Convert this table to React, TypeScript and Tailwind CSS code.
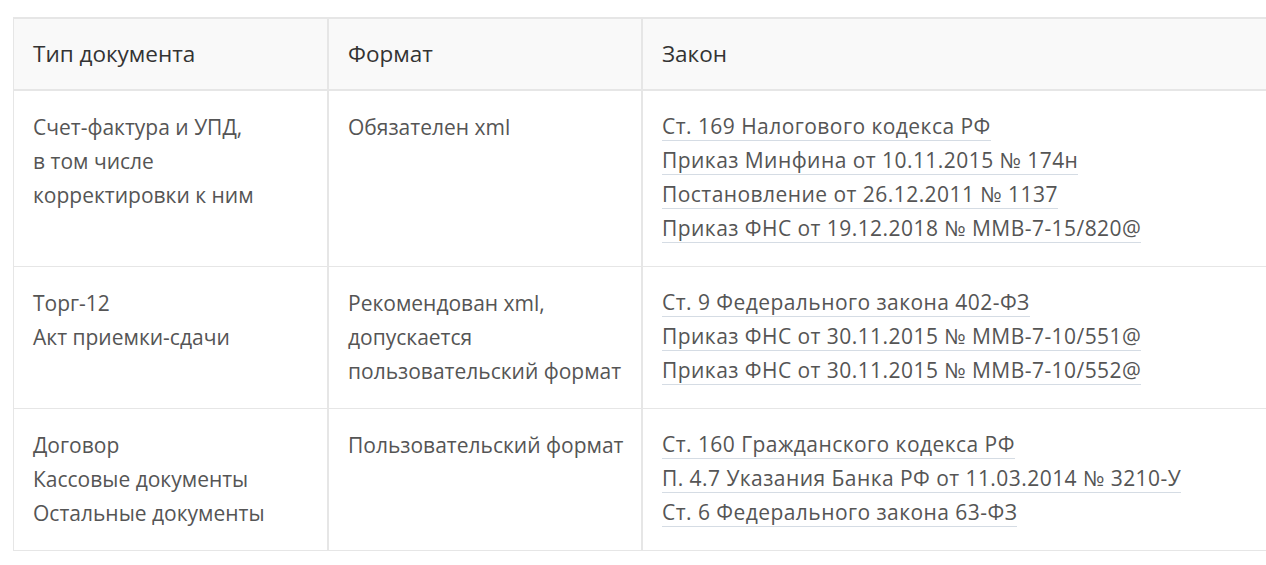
import React from "react";

const rows = [
  {
    type: ["Счет-фактура и УПД,", "в том числе", "корректировки к ним"],
    format: ["Обязателен xml"],
    laws: [
      "Ст. 169 Налогового кодекса РФ",
      "Приказ Минфина от 10.11.2015 № 174н",
      "Постановление от 26.12.2011 № 1137",
      "Приказ ФНС от 19.12.2018 № ММВ-7-15/820@",
    ],
  },
  {
    type: ["Торг-12", "Акт приемки-сдачи"],
    format: ["Рекомендован xml,", "допускается", "пользовательский формат"],
    laws: [
      "Ст. 9 Федерального закона 402-ФЗ",
      "Приказ ФНС от 30.11.2015 № ММВ-7-10/551@",
      "Приказ ФНС от 30.11.2015 № ММВ-7-10/552@",
    ],
  },
  {
    type: ["Договор", "Кассовые документы", "Остальные документы"],
    format: ["Пользовательский формат"],
    laws: [
      "Ст. 160 Гражданского кодекса РФ",
      "П. 4.7 Указания Банка РФ от 11.03.2014 № 3210-У",
      "Ст. 6 Федерального закона 63-ФЗ",
    ],
  },
];

const App = () => {
  return (
    <div className="h-[565px] w-[1266px] overflow-hidden bg-white pl-[13px] pt-[17px] font-['Open_Sans',sans-serif] text-[21px]">
      <div className="w-[1300px] border-l border-t-2 border-[#e6e6e6]">
        <div className="flex border-b-2 border-[#e6e6e6] bg-[#f9f9f9] text-[22.5px] leading-[34px] text-[#333]">
          <div className="w-[315px] shrink-0 border-r-2 border-[#e6e6e6] px-[19px] py-[18px]">
            Тип документа
          </div>
          <div className="w-[314px] shrink-0 border-r-2 border-[#e6e6e6] px-[19px] py-[18px]">
            Формат
          </div>
          <div className="flex-1 px-[19px] py-[18px]">Закон</div>
        </div>

        {rows.map((row, i) => (
          <div key={i} className="flex border-b border-[#e6e6e6] text-[#555]">
            <div className="w-[315px] shrink-0 border-r-2 border-[#e6e6e6] px-[19px] py-[19px] leading-[34px]">
              {row.type.map((t) => (
                <div key={t} className="whitespace-nowrap">
                  {t}
                </div>
              ))}
            </div>
            <div className="w-[314px] shrink-0 border-r-2 border-[#e6e6e6] py-[19px] pl-[19px] pr-[8px] leading-[34px]">
              {row.format.map((t) => (
                <div key={t} className="whitespace-nowrap">
                  {t}
                </div>
              ))}
            </div>
            <div className="flex-1 px-[19px] pb-[17px] pt-[22px] tracking-[0.45px]">
              {row.laws.map((t) => (
                <a
                  key={t}
                  href="#"
                  className="mb-[6px] block w-fit whitespace-nowrap border-b border-[#d5dce4] leading-[27px] text-[#555]"
                >
                  {t}
                </a>
              ))}
            </div>
          </div>
        ))}
      </div>
    </div>
  );
};

export default App;
